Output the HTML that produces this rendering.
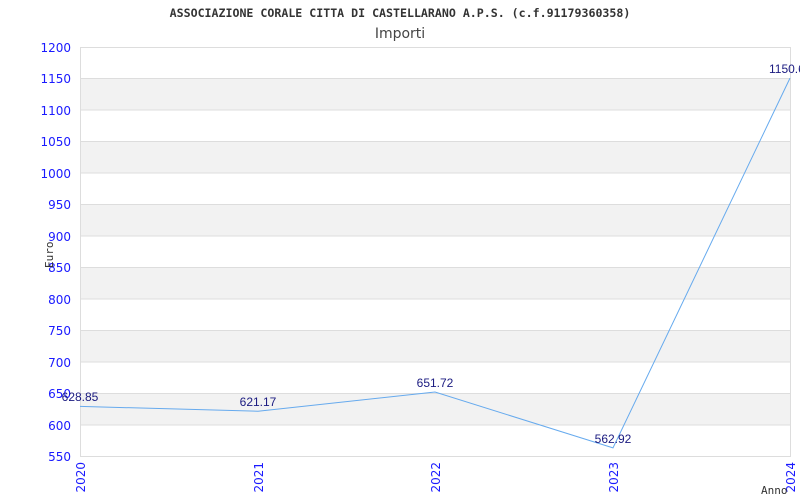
<!DOCTYPE html>
<html><head><meta charset="utf-8"><style>
html,body{margin:0;padding:0;background:#fff;width:800px;height:500px;overflow:hidden}
</style></head><body>
<svg width="800" height="500" xmlns="http://www.w3.org/2000/svg">
<rect width="800" height="500" fill="#fff"/>
<text x="400" y="17" text-anchor="middle" font-family="DejaVu Sans Mono, monospace" font-weight="bold" font-size="11.6" fill="#333">ASSOCIAZIONE CORALE CITTA DI CASTELLARANO A.P.S. (c.f.91179360358)</text>
<text x="400" y="38" text-anchor="middle" font-family="DejaVu Sans, sans-serif" font-size="14" fill="#444">Importi</text>
<g fill="#f2f2f2">
<rect x="80" y="78.5" width="710" height="31.5"/>
<rect x="80" y="141.4" width="710" height="31.5"/>
<rect x="80" y="204.3" width="710" height="31.5"/>
<rect x="80" y="267.2" width="710" height="31.5"/>
<rect x="80" y="330.2" width="710" height="31.5"/>
<rect x="80" y="393.1" width="710" height="31.5"/>
</g>
<g stroke="#ddd" stroke-width="1">
<line x1="80" y1="47.5" x2="790" y2="47.5"/>
<line x1="80" y1="78.5" x2="790" y2="78.5"/>
<line x1="80" y1="110" x2="790" y2="110"/>
<line x1="80" y1="141.5" x2="790" y2="141.5"/>
<line x1="80" y1="173" x2="790" y2="173"/>
<line x1="80" y1="204.5" x2="790" y2="204.5"/>
<line x1="80" y1="236" x2="790" y2="236"/>
<line x1="80" y1="267.5" x2="790" y2="267.5"/>
<line x1="80" y1="299" x2="790" y2="299"/>
<line x1="80" y1="330.5" x2="790" y2="330.5"/>
<line x1="80" y1="362" x2="790" y2="362"/>
<line x1="80" y1="393.5" x2="790" y2="393.5"/>
<line x1="80" y1="425" x2="790" y2="425"/>
<line x1="80" y1="456.5" x2="790" y2="456.5"/>
<line x1="80.5" y1="47" x2="80.5" y2="457"/>
<line x1="790.5" y1="47" x2="790.5" y2="457"/>
</g>
<g font-family="DejaVu Sans, sans-serif" font-size="12" fill="#1a1aff" text-anchor="end">
<text x="71" y="52">1200</text><text x="71" y="83">1150</text><text x="71" y="115">1100</text>
<text x="71" y="146">1050</text><text x="71" y="178">1000</text><text x="71" y="209">950</text>
<text x="71" y="241">900</text><text x="71" y="272">850</text><text x="71" y="304">800</text>
<text x="71" y="335">750</text><text x="71" y="367">700</text><text x="71" y="398">650</text>
<text x="71" y="430">600</text><text x="71" y="461">550</text>
</g>
<g font-family="DejaVu Sans, sans-serif" font-size="12" fill="#1a1aff" text-anchor="end">
<text transform="translate(85,462) rotate(-90)">2020</text>
<text transform="translate(263,462) rotate(-90)">2021</text>
<text transform="translate(440,462) rotate(-90)">2022</text>
<text transform="translate(618,462) rotate(-90)">2023</text>
<text transform="translate(795,462) rotate(-90)">2024</text>
</g>
<text transform="translate(53,268) rotate(-90)" font-family="DejaVu Sans Mono, monospace" font-size="11" fill="#333">Euro</text>
<text x="761" y="494" font-family="DejaVu Sans Mono, monospace" font-size="11" fill="#333">Anno</text>
<polyline points="80,406.4 258,411.2 435,392 613,447.9 790,78.1" fill="none" stroke="#66aaee" stroke-width="1"/>
<g font-family="Liberation Sans, Arial, sans-serif" font-size="12" fill="#1a1a80" text-anchor="middle">
<text x="80" y="401">628.85</text>
<text x="258" y="406">621.17</text>
<text x="435" y="387">651.72</text>
<text x="613" y="443">562.92</text>
<text x="769" y="73" text-anchor="start">1150.6</text>
</g>
</svg>
</body></html>
